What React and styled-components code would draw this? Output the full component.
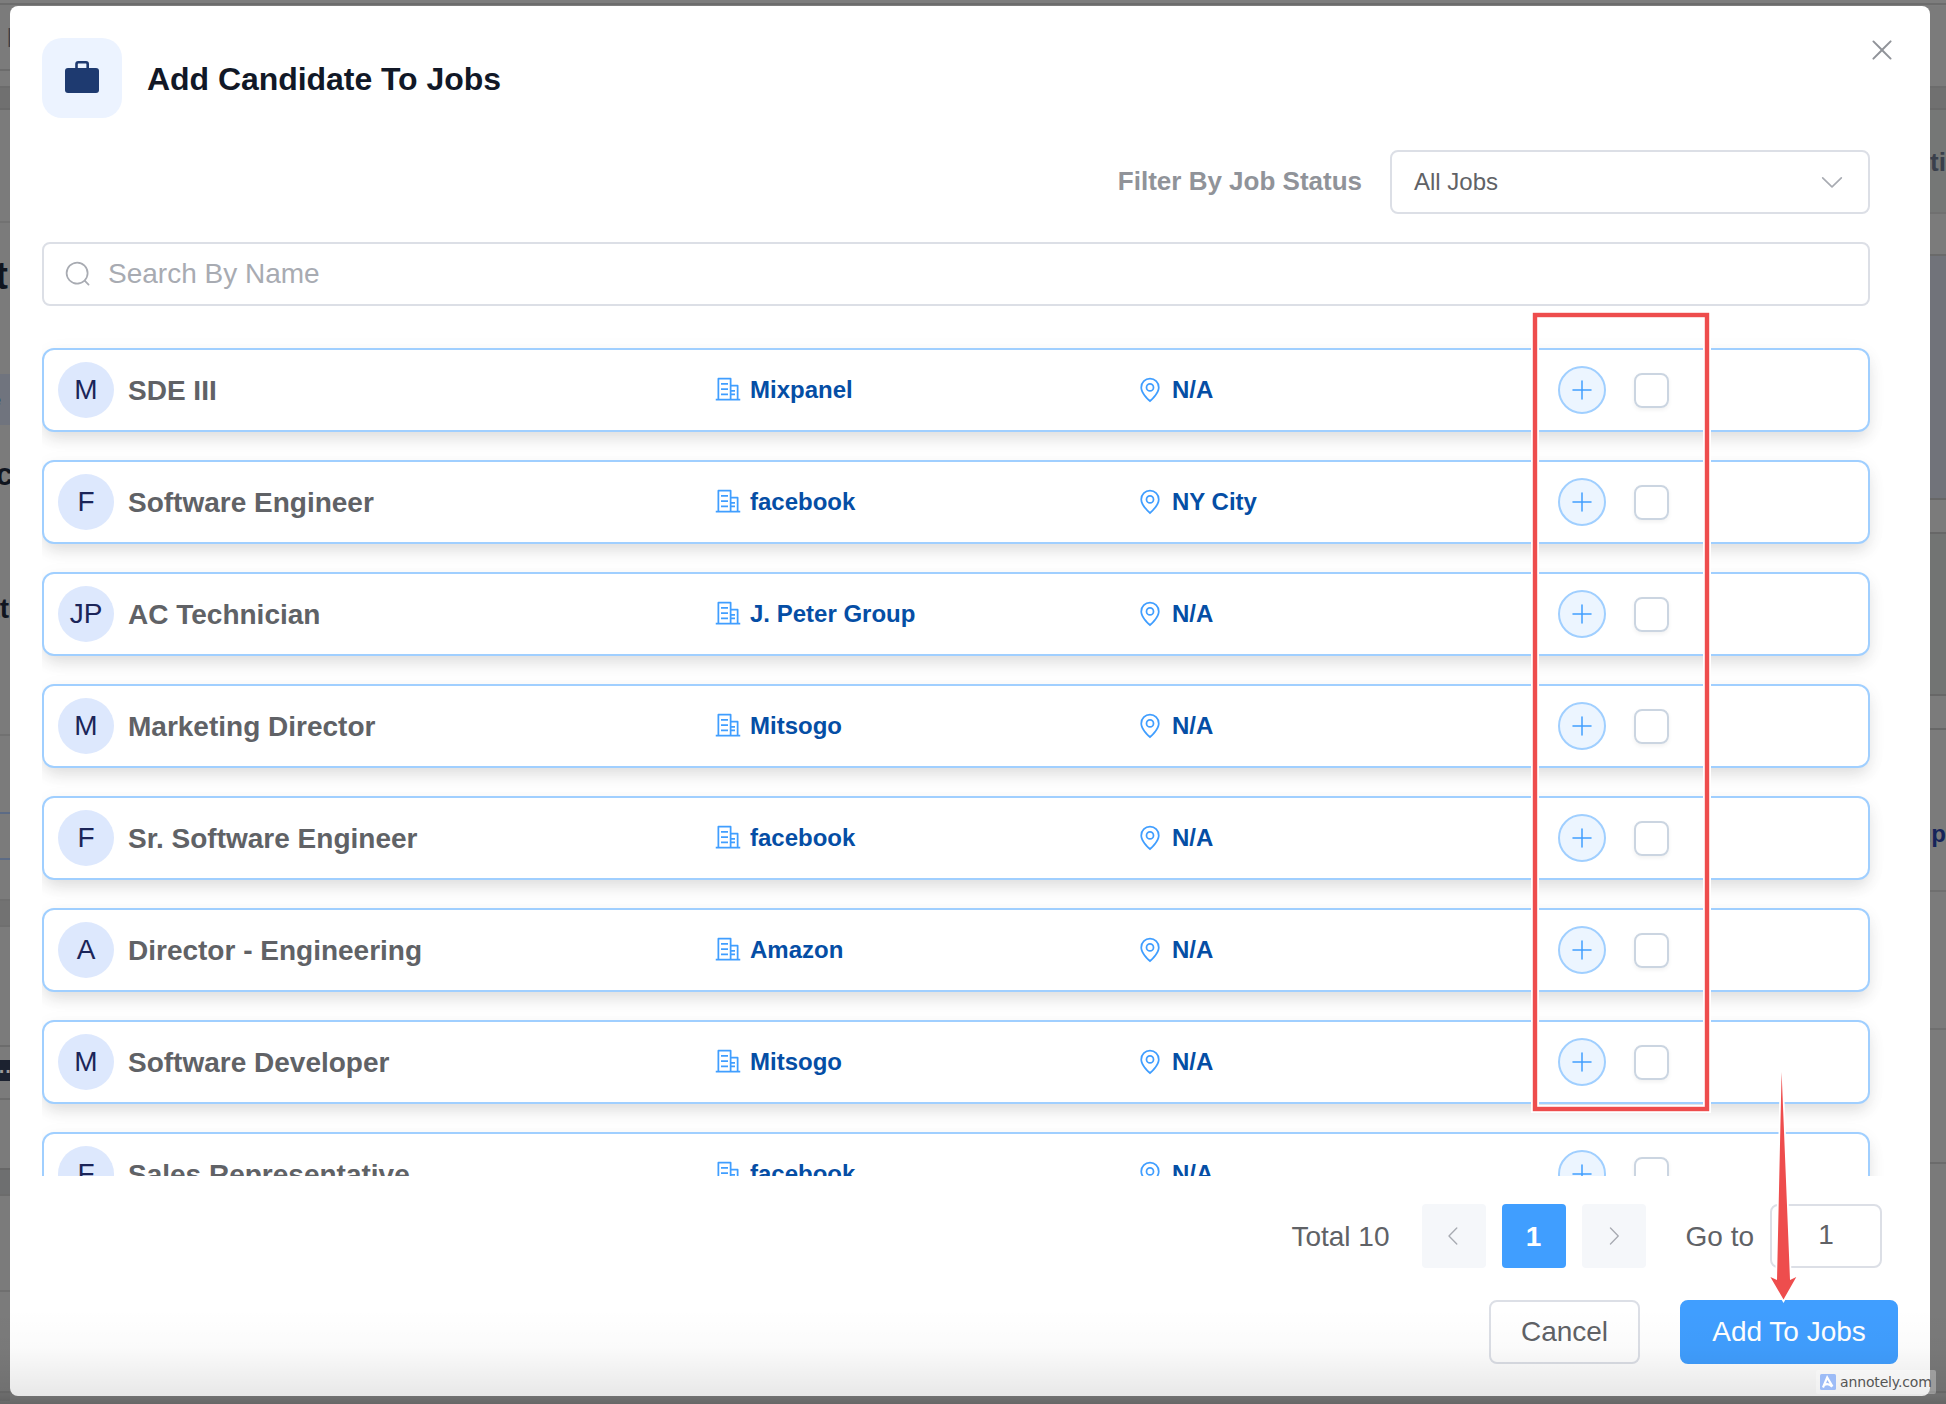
import React from 'react';
import styled, { createGlobalStyle } from 'styled-components';

const GlobalStyle = createGlobalStyle`
	* {
		box-sizing: border-box;
	}
	body {
		margin: 0;
		overflow: hidden;
		font-family: "Liberation Sans", Arial, sans-serif;
		color: #606266;
	}
`;

const Page = styled.div`
	position: relative;
	display: grid;
	grid-template-columns: 10px 1920px 16px;
	width: 1946px;
	height: 1404px;
	overflow: hidden;
	background: linear-gradient(#7d7d7d 0 3px, #6c6c6c 3px 5px, #7d7d7d 5px);
`;

/* page content peeking out on both sides of the dialog */
const Edge = styled.div`
	display: flex;
	flex-direction: column;
	overflow: hidden;
	padding-top: ${props => props.$top}px;
`;

const Strip = styled.div`
	display: flex;
	align-items: center;
	justify-content: ${props => (props.$end ? 'flex-end' : 'flex-start')};
	flex: 0 0 ${props => props.$h}px;
	height: ${props => props.$h}px;
	padding: ${props => props.$pad || '0'};
	overflow: hidden;
	white-space: nowrap;
	font-size: ${props => props.$size || 28}px;
	font-weight: bold;
	color: ${props => props.$color || '#10151f'};
	background: ${props => props.$bg || '#7b7b7b'};
	border-top: 2px solid ${props => props.$line || props.$bg || '#7b7b7b'};
`;

const StripText = styled.span`
	margin-right: -${props => props.$out || 0}px;
`;

const Dialog = styled.div`
	display: flex;
	flex-direction: column;
	height: 1390px;
	margin-top: 6px;
	padding: 32px;
	background: #fff;
	border-radius: 8px;
`;

const Header = styled.div`
	display: flex;
	align-items: center;
	height: 80px;
`;

const HeaderIcon = styled.div`
	display: flex;
	align-items: center;
	justify-content: center;
	width: 80px;
	height: 80px;
	padding-bottom: 2px;
	border-radius: 20px;
	background: #ecf3ff;
`;

const Title = styled.h1`
	margin: 2px 0 0 25px;
	font-size: 32px;
	line-height: 40px;
	letter-spacing: -0.05px;
	color: #111827;
`;

const CloseButton = styled.button`
	align-self: flex-start;
	height: 32px;
	margin: -4px 0 0 auto;
	padding: 0;
	border: 0;
	background: none;
	color: #909399;
`;

const Icon = styled.svg`
	display: block;
	flex: none;
	width: ${props => props.$size}px;
	height: ${props => props.$size}px;
	fill: currentColor;
`;

const FilterRow = styled.div`
	display: flex;
	align-items: center;
	justify-content: flex-end;
	gap: 28px;
	margin: 32px 28px 0 0;
`;

const FilterLabel = styled.label`
	padding-bottom: 2px;
	font-size: 26px;
	font-weight: bold;
	color: #909399;
`;

const Select = styled.div`
	display: flex;
	align-items: center;
	justify-content: space-between;
	width: 480px;
	height: 64px;
	padding: 0 22px;
	border: 2px solid #dcdfe6;
	border-radius: 8px;
	font-size: 24px;

	svg {
		color: #a8abb2;
	}
`;

const SearchBox = styled.div`
	display: flex;
	align-items: center;
	gap: 16px;
	height: 64px;
	margin: 28px 28px 0 0;
	padding: 0 20px;
	border: 2px solid #dcdfe6;
	border-radius: 8px;
	font-size: 28px;
	color: #a8abb2;
`;

const JobList = styled.div`
	flex: none;
	height: 840px;
	margin-top: 30px;
	padding: 12px 28px 0 0;
	overflow: hidden;
`;

const JobRow = styled.div`
	display: grid;
	grid-template-columns: 656px 422px 422px auto;
	align-items: center;
	height: 84px;
	margin-bottom: 28px;
	padding-left: 14px;
	background: #fff;
	border: 2px solid #a0cfff;
	border-radius: 12px;
	box-shadow: 0 8px 16px -2px rgba(0, 0, 0, 0.12), 0 4px 24px rgba(0, 0, 0, 0.03);
`;

const JobTitle = styled.div`
	display: flex;
	align-items: center;
	gap: 14px;
	font-size: 28px;
	font-weight: bold;
`;

const JobName = styled.span`
	padding-top: 2px;
`;

const Avatar = styled.span`
	display: flex;
	align-items: center;
	justify-content: center;
	width: 56px;
	height: 56px;
	border-radius: 50%;
	background: #dde8fd;
	font-weight: normal;
	color: #1b2559;
`;

const Detail = styled.div`
	display: flex;
	align-items: center;
	gap: 8px;
	font-size: 24px;
	font-weight: bold;
	color: #054ea5;

	svg {
		color: #409eff;
	}
`;

const RowActions = styled.div`
	display: flex;
	align-items: center;
	gap: 28px;
`;

const PlusButton = styled.button`
	display: flex;
	align-items: center;
	justify-content: center;
	width: 48px;
	height: 48px;
	padding: 0;
	border: 2px solid #a0cfff;
	border-radius: 50%;
	background: #ecf5ff;
	color: #409eff;
`;

const Checkbox = styled.span`
	width: 35px;
	height: 35px;
	margin-top: 1px;
	border: 2px solid #cbd5e1;
	border-radius: 8px;
	box-shadow: 0 2px 4px rgba(0, 0, 0, 0.06);
`;

const Pagination = styled.div`
	display: flex;
	align-items: center;
	justify-content: flex-end;
	gap: 16px;
	height: 64px;
	margin: 28px 16px 0 0;
	font-size: 28px;
`;

const Total = styled.span`
	margin-right: 16px;
	padding-top: 2px;
`;

const Pager = styled.button`
	display: flex;
	align-items: center;
	justify-content: center;
	width: 64px;
	height: 64px;
	padding: ${props => (props.$active ? '2px 0 0' : '0')};
	border: 0;
	border-radius: 4px;
	font: bold 28px "Liberation Sans", Arial, sans-serif;
	background: ${props => (props.$active ? '#409eff' : '#f5f7fa')};
	color: ${props => (props.$active ? '#fff' : '#a8abb2')};
`;

const GoTo = styled.span`
	margin-left: 24px;
	padding-top: 2px;
`;

const PageInput = styled.div`
	width: 112px;
	height: 64px;
	border: 2px solid #dcdfe6;
	border-radius: 8px;
	line-height: 58px;
	text-align: center;
`;

const Footer = styled.div`
	display: flex;
	justify-content: flex-end;
	gap: 40px;
	margin-top: 32px;
`;

const Button = styled.button`
	width: ${props => props.$width}px;
	height: 64px;
	padding: 0;
	border: 2px solid ${props => (props.$primary ? '#409eff' : '#dcdfe6')};
	border-radius: 8px;
	background: ${props => (props.$primary ? '#409eff' : '#fff')};
	color: ${props => (props.$primary ? '#fff' : '#606266')};
	font: 28px "Liberation Sans", Arial, sans-serif;
`;

const BottomShade = styled.div`
	position: absolute;
	left: 0;
	right: 0;
	bottom: 0;
	height: 96px;
	pointer-events: none;
	background: linear-gradient(rgba(0, 0, 0, 0), rgba(0, 0, 0, 0.015) 40%, rgba(0, 0, 0, 0.09) 91%, rgba(0, 0, 0, 0.18));
`;

const Annotations = styled.svg`
	position: absolute;
	left: 0;
	top: 0;
`;

const Watermark = styled.div`
	position: absolute;
	left: 1816px;
	top: 1370px;
	display: flex;
	align-items: center;
	gap: 4px;
	width: 120px;
	height: 24px;
	padding-left: 4px;
	border-radius: 2px;
	background: rgba(255, 255, 255, 0.3);
	font: 14px "DejaVu Sans", sans-serif;
	letter-spacing: -0.15px;
	color: #555;
`;

const PATHS = {
	close: 'M764.288 214.592 512 466.88 259.712 214.592a31.936 31.936 0 0 0-45.12 45.12L466.752 512 214.528 764.224a31.936 31.936 0 1 0 45.12 45.184L512 557.184l252.288 252.288a31.936 31.936 0 0 0 45.12-45.12L557.12 512.064l252.288-252.352a31.936 31.936 0 1 0-45.12-45.184z',
	search: 'm795.904 750.72 124.992 124.928a32 32 0 0 1-45.248 45.248L750.656 795.904a416 416 0 1 1 45.248-45.248zM480 832a352 352 0 1 0 0-704 352 352 0 0 0 0 704',
	down: 'M831.872 340.864 512 652.672 192.128 340.864a30.592 30.592 0 0 0-42.752 0 29.12 29.12 0 0 0 0 41.6L489.664 714.24a32 32 0 0 0 44.672 0l340.288-331.712a29.12 29.12 0 0 0 0-41.728 30.592 30.592 0 0 0-42.752 0z',
	left: 'M609.408 149.376 277.76 489.6a32 32 0 0 0 0 44.672l331.648 340.352a29.12 29.12 0 0 0 41.728 0 30.592 30.592 0 0 0 0-42.752L339.264 511.936l311.872-319.872a30.592 30.592 0 0 0 0-42.688 29.12 29.12 0 0 0-41.728 0z',
	right: 'M340.864 149.312a30.592 30.592 0 0 0 0 42.752L652.736 512 340.864 831.872a30.592 30.592 0 0 0 0 42.752 29.12 29.12 0 0 0 41.728 0L714.24 534.336a32 32 0 0 0 0-44.672L382.592 149.376a29.12 29.12 0 0 0-41.728 0z',
	plus: 'M480 480V128a32 32 0 0 1 64 0v352h352a32 32 0 1 1 0 64H544v352a32 32 0 1 1-64 0V544H128a32 32 0 0 1 0-64z',
	pin: 'M800 416a288 288 0 1 0-576 0c0 118.144 94.528 272.128 288 456.576C705.472 688.128 800 534.144 800 416M512 960C277.312 746.688 160 565.312 160 416a352 352 0 0 1 704 0c0 149.312-117.312 330.688-352 544M512 512a96 96 0 1 0 0-192 96 96 0 0 0 0 192m0 64a160 160 0 1 1 0-320 160 160 0 0 1 0 320',
	office: 'M192 128v704h384V128zm-32-64h448a32 32 0 0 1 32 32v768a32 32 0 0 1-32 32H160a32 32 0 0 1-32-32V96a32 32 0 0 1 32-32M256 256h256v64H256zm0 192h256v64H256zm0 192h256v64H256zm384-128h128v64H640zm0 128h128v64H640zM64 832h896v64H64zM640 384v448h192V384zm-32-64h256a32 32 0 0 1 32 32v512a32 32 0 0 1-32 32H608a32 32 0 0 1-32-32V352a32 32 0 0 1 32-32',
};

const Glyph = ({ name, size }) => (
	<Icon $size={size} viewBox="0 0 1024 1024">
		<path d={PATHS[name]} />
	</Icon>
);

const jobs = [
	{ initials: 'M', title: 'SDE III', company: 'Mixpanel', location: 'N/A' },
	{ initials: 'F', title: 'Software Engineer', company: 'facebook', location: 'NY City' },
	{ initials: 'JP', title: 'AC Technician', company: 'J. Peter Group', location: 'N/A' },
	{ initials: 'M', title: 'Marketing Director', company: 'Mitsogo', location: 'N/A' },
	{ initials: 'F', title: 'Sr. Software Engineer', company: 'facebook', location: 'N/A' },
	{ initials: 'A', title: 'Director - Engineering', company: 'Amazon', location: 'N/A' },
	{ initials: 'M', title: 'Software Developer', company: 'Mitsogo', location: 'N/A' },
	{ initials: 'F', title: 'Sales Representative', company: 'facebook', location: 'N/A' },
];

const leftStrips = [
	{ h: 64, text: 'l', size: 26, color: '#40404a', out: 4 },
	{ h: 17, line: '#6c6c6c' },
	{ h: 22, line: '#6c6c6c', bg: '#707070' },
	{ h: 113, line: '#6a6a6a' },
	{ h: 153, line: '#727272', text: 't', size: 38, out: -2, pad: '0 0 44px' },
	{ h: 51, bg: '#70747e', text: 'e', size: 18, color: '#2c4a70', out: -9 },
	{ h: 97, text: 'c', size: 31, out: 3 },
	{ h: 212, text: 'at', size: 28, out: -1, pad: '0 0 41px' },
	{ h: 3, line: '#717171' },
	{ h: 75 },
	{ h: 46, line: '#5c6b85' },
	{ h: 41, line: '#5c6b85' },
	{ h: 26, line: '#6f6f6f', bg: '#727272' },
	{ h: 120, line: '#6f6f6f' },
	{ h: 15, line: '#6c6c6c' },
	{ h: 21, bg: '#1c2230', text: '··', size: 20, color: '#9a9a9a', out: 2 },
	{ h: 17 },
	{ h: 70, line: '#6c6c6c' },
	{ h: 26, line: '#676767', bg: '#6e6f70' },
	{ h: 96, line: '#6c6c6c' },
	{ h: 101, line: '#6f6f6f' },
	{ h: 10, line: '#6f6f6f', bg: '#757575' },
];

const rightStrips = [
	{ h: 80 },
	{ h: 22, line: '#6c6c6c', bg: '#707070' },
	{ h: 104, line: '#6a6a6a', bg: '#757776', text: 'tic', size: 26, color: '#3a404c', pad: '2px 0 0' },
	{ h: 42, line: '#707070' },
	{ h: 244, line: '#6a6a6a', bg: '#71737a' },
	{ h: 34, line: '#676767' },
	{ h: 162, line: '#676767', bg: '#727473' },
	{ h: 34, line: '#676767' },
	{ h: 162, line: '#676767', text: 'up', end: true, size: 24, color: '#16245a', pad: '48px 0 0' },
	{ h: 138, line: '#6f6f6f' },
	{ h: 134, line: '#6f6f6f' },
	{ h: 229, line: '#6b6b6b', bg: '#7a7a7a' },
	{ h: 12, line: '#6f6f6f' },
];

const renderStrips = strips => strips.map((s, idx) => (
	<Strip key={idx} $h={s.h} $bg={s.bg} $line={s.line} $size={s.size} $color={s.color} $end={s.end} $pad={s.pad}>
		{s.text && <StripText style={{ marginRight: -(s.out || 0) }}>{s.text}</StripText>}
	</Strip>
));

const App = () => (
	<>
		<GlobalStyle />
		<Page>
			<Edge $top={5}>
				{renderStrips(leftStrips.map(s => ({ ...s, end: true })))}
			</Edge>

			<Dialog>
				<Header>
					<HeaderIcon>
						<svg width="34" height="32" viewBox="0 0 34 32">
							<rect y="7" width="34" height="25" rx="3" fill="#1e3a70" />
							<path d="M11.5 8V3Q11.5 1.3 13.2 1.3H21Q22.7 1.3 22.7 3V8" fill="none" stroke="#1e3a70" strokeWidth="2.6" />
						</svg>
					</HeaderIcon>
					<Title>Add Candidate To Jobs</Title>
					<CloseButton><Glyph name="close" size={32} /></CloseButton>
				</Header>

				<FilterRow>
					<FilterLabel>Filter By Job Status</FilterLabel>
					<Select>
						All Jobs
						<Glyph name="down" size={28} />
					</Select>
				</FilterRow>

				<SearchBox>
					<Glyph name="search" size={28} />
					Search By Name
				</SearchBox>

				<JobList>
					{jobs.map((job, idx) => (
						<JobRow key={job.title + idx}>
							<JobTitle><Avatar>{job.initials}</Avatar><JobName>{job.title}</JobName></JobTitle>
							<Detail><Glyph name="office" size={28} />{job.company}</Detail>
							<Detail><Glyph name="pin" size={28} />{job.location}</Detail>
							<RowActions>
								<PlusButton><Glyph name="plus" size={24} /></PlusButton>
								<Checkbox />
							</RowActions>
						</JobRow>
					))}
				</JobList>

				<Pagination>
					<Total>Total 10</Total>
					<Pager><Glyph name="left" size={24} /></Pager>
					<Pager $active>1</Pager>
					<Pager><Glyph name="right" size={24} /></Pager>
					<GoTo>Go to</GoTo>
					<PageInput>1</PageInput>
				</Pagination>

				<Footer>
					<Button $width={151}>Cancel</Button>
					<Button $width={218} $primary>Add To Jobs</Button>
				</Footer>
			</Dialog>

			<Edge $top={6}>
				{renderStrips(rightStrips)}
			</Edge>

			<BottomShade />

			<Annotations width="1946" height="1404" viewBox="0 0 1946 1404">
				<rect x="1535" y="315" width="172" height="794" fill="none" stroke="#fff" strokeWidth="8" />
				<rect x="1535" y="315" width="172" height="794" fill="none" stroke="#ee4d4d" strokeWidth="4.4" />
				<path
					d="M1781.6 1072L1790 1280L1796.3 1277L1783.5 1299.5L1770.4 1277L1777 1280Z"
					fill="#ee4d4d"
					stroke="#fff"
					strokeWidth="3.5"
					paintOrder="stroke"
				/>
			</Annotations>

			<Watermark>
				<svg width="16" height="16" viewBox="0 0 16 16">
					<rect width="16" height="16" rx="1.5" fill="#9dbcf7" />
					<path d="M3 13.5L7.2 3.5L12.5 12.5M4.6 10.8Q8 8.6 12.2 12.6" fill="none" stroke="#fff" strokeWidth="2.2" />
				</svg>
				annotely.com
			</Watermark>
		</Page>
	</>
);

export default App;
